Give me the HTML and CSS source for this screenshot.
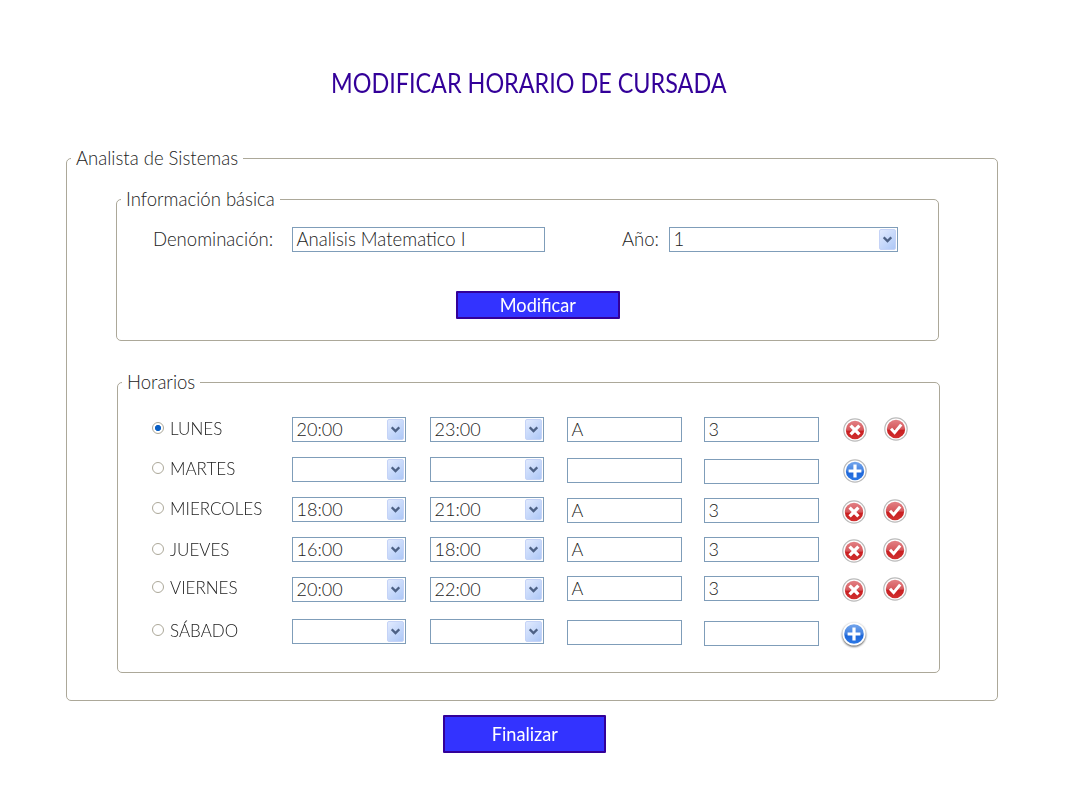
FILE: index.html
```html
<!DOCTYPE html>
<html lang="es">
<head>
<meta charset="utf-8">
<title>Modificar horario de cursada</title>
<link rel="stylesheet" href="styles.css">
</head>
<body>
<svg width="0" height="0" class="defs">
  <defs>
    <linearGradient id="red" x1="0" y1="0" x2="0" y2="1"><stop offset="0" stop-color="#e28084"/><stop offset=".52" stop-color="#d6575b"/><stop offset=".54" stop-color="#c81e20"/><stop offset="1" stop-color="#d23030"/></linearGradient>
    <linearGradient id="blue" x1="0" y1="0" x2="0" y2="1"><stop offset="0" stop-color="#73a5ec"/><stop offset=".52" stop-color="#4180e0"/><stop offset=".54" stop-color="#1c65d8"/><stop offset="1" stop-color="#2c78e6"/></linearGradient>
    <symbol id="del" viewBox="0 0 26 26"><circle cx="13" cy="13" r="11.2" fill="#fff" stroke="#bbb" stroke-width="1.2"/><circle cx="13" cy="13" r="9.2" fill="url(#red)"/><path d="M8.6 8.6l8.8 8.8M17.4 8.6l-8.8 8.8" stroke="#fff" stroke-width="3.3"/></symbol>
    <symbol id="ok" viewBox="0 0 26 26"><circle cx="13" cy="13" r="11.2" fill="#fff" stroke="#bbb" stroke-width="1.2"/><circle cx="13" cy="13" r="9.2" fill="url(#red)"/><path d="M8 12.8l3.6 3.8L18.2 8.6" fill="none" stroke="#fff" stroke-width="3"/></symbol>
    <symbol id="add" viewBox="0 0 26 26"><circle cx="13" cy="13" r="11.2" fill="#fff" stroke="#bbb" stroke-width="1.2"/><circle cx="13" cy="13" r="9.2" fill="url(#blue)"/><path d="M13 6.6v12.8M6.6 13h12.8" stroke="#fff" stroke-width="3.2"/></symbol>
    <symbol id="add-raised" viewBox="0 0 26 26"><circle cx="13" cy="13" r="11.6" fill="#fff"/><circle cx="13" cy="13" r="9.8" fill="url(#blue)"/><path d="M13 6.6v12.8M6.6 13h12.8" stroke="#fff" stroke-width="3.2"/></symbol>
    <symbol id="arrow" viewBox="0 0 9 7"><path d="M.7 1.2L4.5 5 8.3 1.2" fill="none" stroke="#4d6185" stroke-width="2.3"/></symbol>
  </defs>
</svg>
<h1 class="title"><span>MODIFICAR HORARIO DE CURSADA</span></h1>
<section class="group career">
  <div class="legend"><span>Analista de Sistemas</span></div>
  <section class="group basic">
    <div class="legend"><span>Información básica</span></div>
    <div class="fields">
      <span class="t name-label">Denominación:</span>
      <div class="box name"><span class="t">Analisis Matematico I</span></div>
      <span class="t year-label">Año:</span>
      <div class="box year"><span class="t">1</span><i class="drop"><svg><use href="#arrow"/></svg></i></div>
    </div>
    <div class="btn modify"><span>Modificar</span></div>
  </section>
  <section class="group times">
    <div class="legend"><span>Horarios</span></div>
    <div class="rows">
      <div class="row">
        <div class="day"><i class="radio on"></i><span class="t">LUNES</span></div>
        <div class="box"><span class="t">20:00</span><i class="drop"><svg><use href="#arrow"/></svg></i></div>
        <div class="box"><span class="t">23:00</span><i class="drop"><svg><use href="#arrow"/></svg></i></div>
        <div class="box"><span class="t">A</span></div>
        <div class="box"><span class="t">3</span></div>
        <svg class="icon"><use href="#del"/></svg><svg class="icon up"><use href="#ok"/></svg>
      </div>
      <div class="row">
        <div class="day"><i class="radio"></i><span class="t">MARTES</span></div>
        <div class="box"><i class="drop"><svg><use href="#arrow"/></svg></i></div>
        <div class="box"><i class="drop"><svg><use href="#arrow"/></svg></i></div>
        <div class="box d1"></div>
        <div class="box d2"></div>
        <svg class="icon i1"><use href="#add"/></svg>
      </div>
      <div class="row left">
        <div class="day"><i class="radio"></i><span class="t">MIERCOLES</span></div>
        <div class="box"><span class="t">18:00</span><i class="drop"><svg><use href="#arrow"/></svg></i></div>
        <div class="box"><span class="t">21:00</span><i class="drop"><svg><use href="#arrow"/></svg></i></div>
        <div class="box d1"><span class="t">A</span></div>
        <div class="box d1"><span class="t">3</span></div>
        <svg class="icon i2"><use href="#del"/></svg><svg class="icon i1"><use href="#ok"/></svg>
      </div>
      <div class="row left">
        <div class="day d1"><i class="radio"></i><span class="t">JUEVES</span></div>
        <div class="box"><span class="t">16:00</span><i class="drop"><svg><use href="#arrow"/></svg></i></div>
        <div class="box"><span class="t">18:00</span><i class="drop"><svg><use href="#arrow"/></svg></i></div>
        <div class="box"><span class="t">A</span></div>
        <div class="box"><span class="t">3</span></div>
        <svg class="icon i1"><use href="#del"/></svg><svg class="icon"><use href="#ok"/></svg>
      </div>
      <div class="row left tall">
        <div class="day u1"><i class="radio"></i><span class="t">VIERNES</span></div>
        <div class="box"><span class="t">20:00</span><i class="drop"><svg><use href="#arrow"/></svg></i></div>
        <div class="box"><span class="t">22:00</span><i class="drop"><svg><use href="#arrow"/></svg></i></div>
        <div class="box u1"><span class="t">A</span></div>
        <div class="box u1"><span class="t">3</span></div>
        <svg class="icon"><use href="#del"/></svg><svg class="icon up"><use href="#ok"/></svg>
      </div>
      <div class="row left">
        <div class="day"><i class="radio"></i><span class="t">SÁBADO</span></div>
        <div class="box"><i class="drop"><svg><use href="#arrow"/></svg></i></div>
        <div class="box"><i class="drop"><svg><use href="#arrow"/></svg></i></div>
        <div class="box d1"></div>
        <div class="box d2"></div>
        <svg class="icon i2 raised"><use href="#add-raised"/></svg>
      </div>
    </div>
  </section>
</section>
<div class="btn finish"><span>Finalizar</span></div>
</body>
</html>
```
FILE: styles.css
```css
* { box-sizing: border-box; }
body { margin: 0; width: 1081px; height: 800px; background: #fff; color: #222; font: 300 18.55px/22px Lato, "Open Sans", sans-serif; display: flow-root; }
.defs { display: block; }
.title { margin: 67px 0 0 331px; font-size: 26px; line-height: 32px; font-weight: 400; color: #309; white-space: nowrap; transform: scaleX(.899); transform-origin: left; }
.group { border: 1px solid #aca899; border-radius: 5px; }
.career { margin: 59px 0 0 66px; width: 932px; height: 543px; }
.legend { display: table; height: 20px; line-height: 20px; margin: -11px 0 0 4px; padding: 0 5px; background: #fff; white-space: nowrap; }
.basic { margin: 31px 0 0 49px; width: 823px; height: 142px; }
.times { margin: 41px 0 0 50px; width: 823px; height: 291px; }
.fields { display: grid; grid-template-columns: 139px 330px 47px 229px; margin: 18px 0 0 36px; height: 25px; }
.t { white-space: nowrap; }
.name-label, .year-label { line-height: 25px; }
.box { display: flex; justify-content: space-between; height: 25px; border: 1px solid #7f9db9; padding: 0 1px 0 3.5px; background: #fff; line-height: 23px; }
.name { width: 253px; }
.drop { display: flex; align-items: center; justify-content: center; width: 17px; height: 21px; margin: 1px 0 0 auto; border: 1px solid #c5d3f7; border-radius: 2px; background: linear-gradient(135deg, #e1eafe, #aec8f7); }
.drop svg { width: 9px; height: 7px; }
.btn { display: flex; align-items: center; justify-content: center; background: #33f; border: 2px solid #309; border-radius: 1px; color: #fff; font-weight: 400; }
.modify { width: 164px; height: 28px; margin: 39px 0 0 339px; }
.modify span, .finish span { transform: scaleX(.98); }
.finish { width: 163px; height: 38px; margin: 14px 0 0 443px; }
.rows { margin: 25px 0 0 34px; }
.row { display: grid; grid-template-columns: 140px 138px 137px 137px 138px 41px 26px; height: 40px; align-items: start; }
.row .t { font-size: 18px; }
.row .box { width: 114px; }
.row .box:nth-child(4), .row .box:nth-child(5) { width: 115px; }
.left .icon { margin-left: -1px; }
.tall { height: 42px; }
.day { display: flex; align-items: center; height: 22px; gap: 6px; }
.day .t { transform: scaleX(.945); transform-origin: left; }
.radio { width: 12px; height: 12px; border: 1px solid #aca899; border-radius: 50%; background: #fff; margin-top: -1px; }
.on { background: radial-gradient(circle, #0a5fc4 2.7px, #fff 3.5px); }
.d1 { margin-top: 1px; }
.d2 { margin-top: 2px; }
.u1 { margin-top: -1px; }
.icon { width: 26px; height: 26px; }
.up { margin-top: -1px; }
.i1 { margin-top: 1px; }
.i2 { margin-top: 2px; }
.raised { filter: drop-shadow(0 1px 1.2px rgba(0,0,0,.7)); }
```
